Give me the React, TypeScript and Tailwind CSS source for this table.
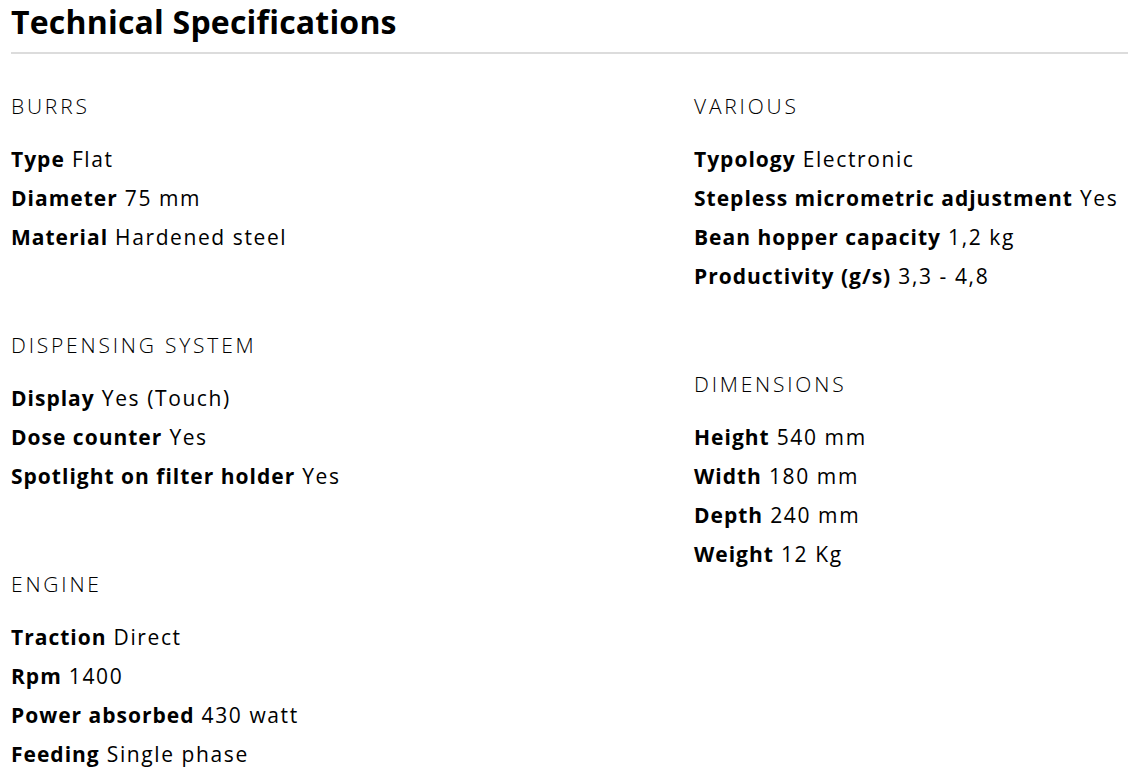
import React from 'react';

type Spec = { label: string; value: string };
type Section = { title: string; items: Spec[] };

const left: Section[] = [
  {
    title: 'BURRS',
    items: [
      { label: 'Type', value: 'Flat' },
      { label: 'Diameter', value: '75 mm' },
      { label: 'Material', value: 'Hardened steel' },
    ],
  },
  {
    title: 'DISPENSING SYSTEM',
    items: [
      { label: 'Display', value: 'Yes (Touch)' },
      { label: 'Dose counter', value: 'Yes' },
      { label: 'Spotlight on filter holder', value: 'Yes' },
    ],
  },
  {
    title: 'ENGINE',
    items: [
      { label: 'Traction', value: 'Direct' },
      { label: 'Rpm', value: '1400' },
      { label: 'Power absorbed', value: '430 watt' },
      { label: 'Feeding', value: 'Single phase' },
    ],
  },
];

const right: Section[] = [
  {
    title: 'VARIOUS',
    items: [
      { label: 'Typology', value: 'Electronic' },
      { label: 'Stepless micrometric adjustment', value: 'Yes' },
      { label: 'Bean hopper capacity', value: '1,2 kg' },
      { label: 'Productivity (g/s)', value: '3,3 - 4,8' },
    ],
  },
  {
    title: 'DIMENSIONS',
    items: [
      { label: 'Height', value: '540 mm' },
      { label: 'Width', value: '180 mm' },
      { label: 'Depth', value: '240 mm' },
      { label: 'Weight', value: '12 Kg' },
    ],
  },
];

function SpecSection({ section }: { section: Section }) {
  return (
    <div className="mb-[69px]">
      <h3 className="text-[21px] leading-[39px] font-light tracking-[2.8px] mb-[14px]">{section.title}</h3>
      <ul>
        {section.items.map((item) => (
          <li key={item.label} className="text-[21px] leading-[39px] whitespace-nowrap tracking-[1.6px]">
            <strong className="font-bold tracking-[1px]">{item.label}</strong> {item.value}
          </li>
        ))}
      </ul>
    </div>
  );
}

export default function App() {
  return (
    <div className="bg-white text-black w-[1128px] h-[773px] overflow-hidden pl-[11px]" style={{ fontFamily: '"Open Sans", sans-serif' }}>
      {/* Header */}
      <h2 className="text-[32px] font-bold leading-[44px] tracking-[0.2px] pb-[8px] border-b-2 border-[#dcdcdc]">
        Technical Specifications
      </h2>

      {/* Two columns */}
      <div className="grid grid-cols-[683px_1fr] pt-[33px]">
        <div>
          {left.map((s) => (
            <SpecSection key={s.title} section={s} />
          ))}
        </div>
        <div>
          {right.map((s) => (
            <SpecSection key={s.title} section={s} />
          ))}
        </div>
      </div>
    </div>
  );
}
